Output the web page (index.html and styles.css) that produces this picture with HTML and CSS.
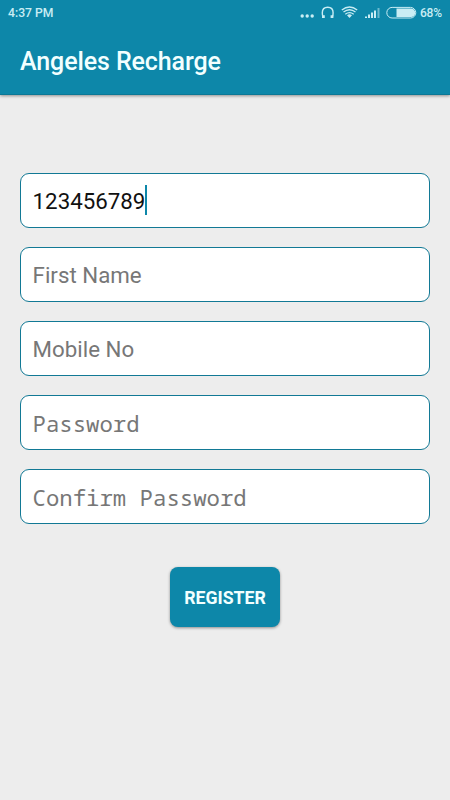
FILE: index.html
```html
<!DOCTYPE html>
<html lang="en">
<head>
<meta charset="utf-8">
<title>Angeles Recharge</title>
<link rel="stylesheet" href="styles.css">
</head>
<body>
<header class="header">
  <div class="status">
    <span class="time">4:37 PM</span>
    <svg class="status-icons" width="118" height="26" viewBox="0 0 118 26" aria-hidden="true">
      <g fill="#c9edf4">
        <circle cx="2.200" cy="16" r="1.700"/><circle cx="7.200" cy="16" r="1.700"/><circle cx="12.200" cy="16" r="1.700"/>
        <path d="M22 15.200h2.800V18H22zM30.600 15.200h2.800V18h-2.800z"/>
        <path d="M47 15.200q2.500-2 5 0L49.500 18z"/>
        <path d="M65 16.500h2V18h-2zM68 14.500h2V18h-2zM71 12.500h2V18h-2zM74 10.500h2V18h-2z"/>
        <path fill-opacity=".5" d="M77.500 8h2v10h-2z"/>
        <path d="M96.500 8.500h14.500a4.200 4.200 0 0 1 0 8.500H96.500z"/>
      </g>
      <g fill="none" stroke="#c9edf4">
        <path stroke-width="1.400" d="M22.900 16.500q-.6-1.500-.6-3.800C22.300 9.300 24.400 7.200 27.700 7.200s5.400 2.100 5.400 5.500q0 2.300-.6 3.800"/>
        <path stroke-width="1.300" d="M41.800 10q7.700-6 15.400 0M43.500 12.100q6-4.700 12 0M45.300 14.200q4.200-3.200 8.400 0"/>
        <rect x="86.800" y="7.400" width="29" height="10.600" rx="5.300"/>
      </g>
    </svg>
    <span class="percent">68%</span>
  </div>
  <h1 class="title">Angeles Recharge</h1>
</header>
<main class="form">
  <div class="field filled"><span>123456789</span><i class="caret"></i></div>
  <div class="field">First Name</div>
  <div class="field">Mobile No</div>
  <div class="field mono">Password</div>
  <div class="field mono">Confirm Password</div>
  <button class="register" type="button">REGISTER</button>
</main>
</body>
</html>
```
FILE: styles.css
```css
* { box-sizing: border-box; }
body {
  margin: 0;
  height: 800px;
  overflow: hidden;
  background: #ededed;
  font-family: Roboto, sans-serif;
}
.header {
  height: 95px;
  background: #0d87a9;
  border-bottom: 1px solid #0b7896;
  box-shadow: 0 1px 3px rgba(0, 0, 0, .4);
}
.status {
  display: flex;
  align-items: center;
  height: 26px;
  padding: 0 8px;
  color: #c9edf4;
  font-size: 12.200px;
  font-weight: 500;
}
.status-icons { margin-left: auto; }
.percent { width: 22px; margin-left: 2px; font-size: 12px; letter-spacing: -.2px; }
.title {
  margin: 19px 0 0 20px;
  color: #f2ffff;
  font-size: 25px;
  line-height: 34px;
  font-weight: 500;
  letter-spacing: -.1px;
}
.form {
  display: flex;
  flex-direction: column;
  gap: 19px;
  padding: 77.600px 20px 0;
}
.field {
  display: flex;
  align-items: center;
  height: 55.100px;
  padding: 1.500px 12px 0 11.600px;
  border: 1px solid #127995;
  border-radius: 9px;
  background: #fff;
  color: #777;
  font-size: 22.300px;
}
.filled { color: #111; }
.caret { width: 2px; height: 30px; margin: -1px 0 0 -.5px; background: #0d87a9; }
.mono { font-family: "Droid Sans Mono", "Noto Sans Mono", "DejaVu Sans Mono", monospace; }
.register {
  align-self: center;
  width: 110px;
  height: 60px;
  margin-top: 23.500px;
  padding: 2px 0 0;
  border: 0;
  border-radius: 8px;
  background: #0d87a9;
  box-shadow: 0 1px 3px rgba(0, 0, 0, .4);
  color: #f2ffff;
  font: 700 17.700px Roboto, sans-serif;
}
```
